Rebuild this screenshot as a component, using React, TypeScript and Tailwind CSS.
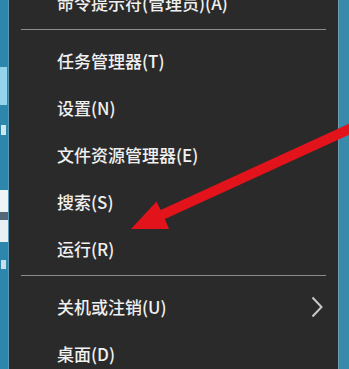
import React from "react";

const groups = [
  ["命令提示符(管理员)(A)"],
  ["任务管理器(T)", "设置(N)", "文件资源管理器(E)", "搜索(S)", "运行(R)"],
  ["关机或注销(U)", "桌面(D)"],
];

const font = { fontFamily: '"Noto Sans CJK SC", "Noto Sans", sans-serif' };

function Chevron() {
  return (
    <svg width="12" height="22" viewBox="0 0 12 22" fill="none">
      <polyline points="1.5,1.5 10.5,11 1.5,20.5" stroke="#c9c9c9" strokeWidth="2" />
    </svg>
  );
}

export default function App() {
  return (
    <div className="relative flex w-[349px] h-[369px] overflow-hidden bg-[#2f88ad]" style={font}>
      {/* desktop peeking out on the left */}
      <div className="flex flex-col w-[9px] shrink-0 bg-[#2d87ad] border-r border-[#5f98b2]">
        <div className="h-[67px]" />
        <div className="h-[38px] w-[7px] bg-[#93d3ec]" />
        <div className="h-[20px]" />
        <div className="h-[10px] w-[5px] ml-[1px] bg-[#cfe6ef]" />
        <div className="h-[55px]" />
        <div className="h-[22px] w-[8px] bg-[#eef3f5]" />
        <div className="h-[8px] w-[8px] bg-[#53697a]" />
        <div className="h-[22px] w-[8px] bg-[#e9f0f3]" />
        <div className="h-[18px]" />
        <div className="h-[9px] w-[5px] ml-[1px] bg-[#c7dfe9]" />
      </div>

      {/* context menu */}
      <div className="flex-1 bg-[#2b2a2b] text-[#f0f0f0] text-[17px] font-medium leading-none">
        <div className="-mt-[21px] flex flex-col">
          {groups.map((items, gi) => (
            <div key={gi}>
              {gi > 0 && (
                <div className="h-[11px] pt-[3px] px-[12px]">
                  <div className="h-px bg-[#8c8c8c]" />
                </div>
              )}
              {items.map((item) => (
                <div key={item} className="h-[47px] flex items-center justify-between pl-[48px] pr-[15px]">
                  <span>{item}</span>
                  {item === "关机或注销(U)" && <Chevron />}
                </div>
              ))}
            </div>
          ))}
        </div>
      </div>

      <div className="w-[11px] shrink-0 bg-[#3989aa] border-l border-[#6d9db3]" />

      {/* red annotation arrow */}
      <svg className="absolute inset-0 pointer-events-none" width="349" height="369" viewBox="0 0 349 369">
        <polygon
          points="356,120.5 356,131.5 164.9,218.9 169,229 131,229 156.5,201.5 160.7,209.9"
          fill="#e3131b"
        />
      </svg>
    </div>
  );
}
